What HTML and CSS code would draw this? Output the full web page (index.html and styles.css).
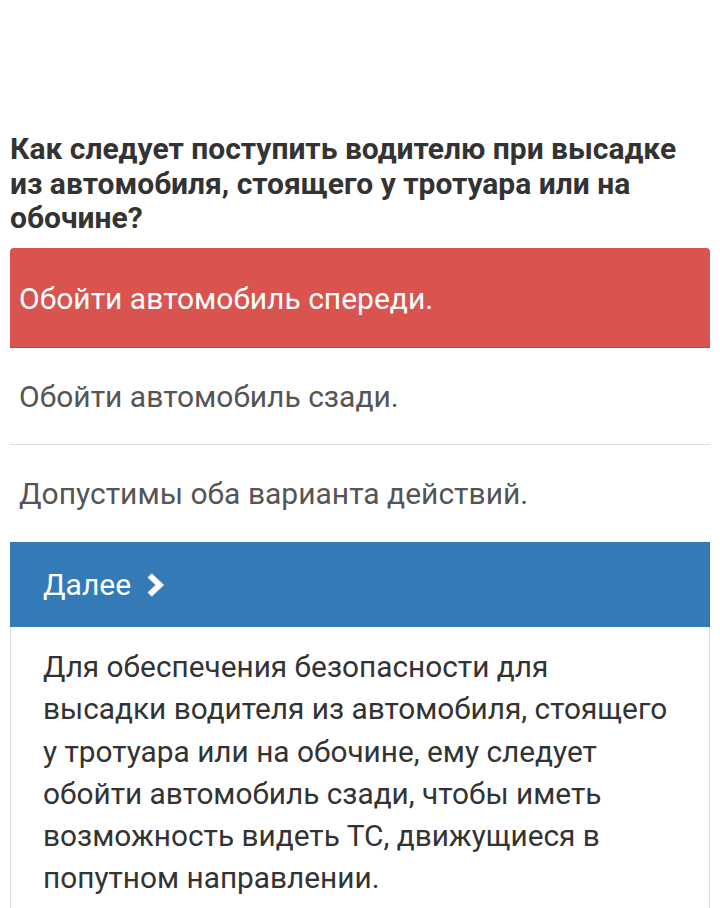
FILE: index.html
```html
<!DOCTYPE html>
<html lang="ru">
<head>
<meta charset="utf-8">
<title>Вопрос</title>
<link rel="stylesheet" href="styles.css">
</head>
<body>
<div class="page">
  <h2 class="question">Как следует поступить водителю при высадке из автомобиля, стоящего у тротуара или на обочине?</h2>
  <div class="answers">
    <div class="answer wrong">Обойти автомобиль спереди.</div>
    <div class="answer">Обойти автомобиль сзади.</div>
    <div class="answer last">Допустимы оба варианта действий.</div>
  </div>
  <div class="next">Далее <svg class="chev" viewBox="0 0 18 24" width="18" height="24"><path d="M1 4.5 L4.8 0.7 L16.6 12 L4.8 23.3 L1 19.5 L8.8 12 Z" fill="#fff" stroke="#fff" stroke-width="0.8" stroke-linejoin="round"/></svg></div>
  <div class="explain">Для обеспечения безопасности для высадки водителя из автомобиля, стоящего у тротуара или на обочине, ему следует обойти автомобиль сзади, чтобы иметь возможность видеть ТС, движущиеся в попутном направлении.</div>
</div>
</body>
</html>
```

FILE: styles.css
```css
html, body {
  margin: 0;
  padding: 0;
  background: #fff;
}
body {
  font-family: Roboto, "Noto Sans", "Liberation Sans", sans-serif;
  color: #333;
}
.page {
  padding: 0 10px;
}
.question {
  margin: 0;
  padding-top: 132px;
  padding-right: 20px;
  font-size: 30px;
  line-height: 34.5px;
  font-weight: 700;
  color: #333;
  margin-bottom: 12.5px;
  letter-spacing: 0;
}
.answers {
  display: flex;
  flex-direction: column;
}
.answer {
  height: 96px;
  display: flex;
  align-items: center;
  padding: 0 9px;
  font-size: 30px;
  color: #555;
  border-bottom: 1px solid #ddd;
}
.answer.wrong {
  background: #d9534f;
  color: #fff;
  border-radius: 4px 4px 0 0;
  height: 98px;
  border-bottom: 1px solid #c9403c;
  padding-top: 1px;
}
.answer.last {
  border-bottom: none;
  height: 97px;
}
.next {
  background: #337ab7;
  color: #fff;
  height: 85px;
  display: flex;
  align-items: center;
  padding-left: 33px;
  font-size: 30px;
  gap: 16px;
  border-right: 1px solid #2e6da4;
}
.chev {
  display: block;
}
.explain {
  border-left: 1px solid #ddd;
  border-right: 1px solid #ddd;
  padding: 19px 38px 20px 32px;
  font-size: 29.8px;
  line-height: 42.3px;
  color: #333;
}
```
